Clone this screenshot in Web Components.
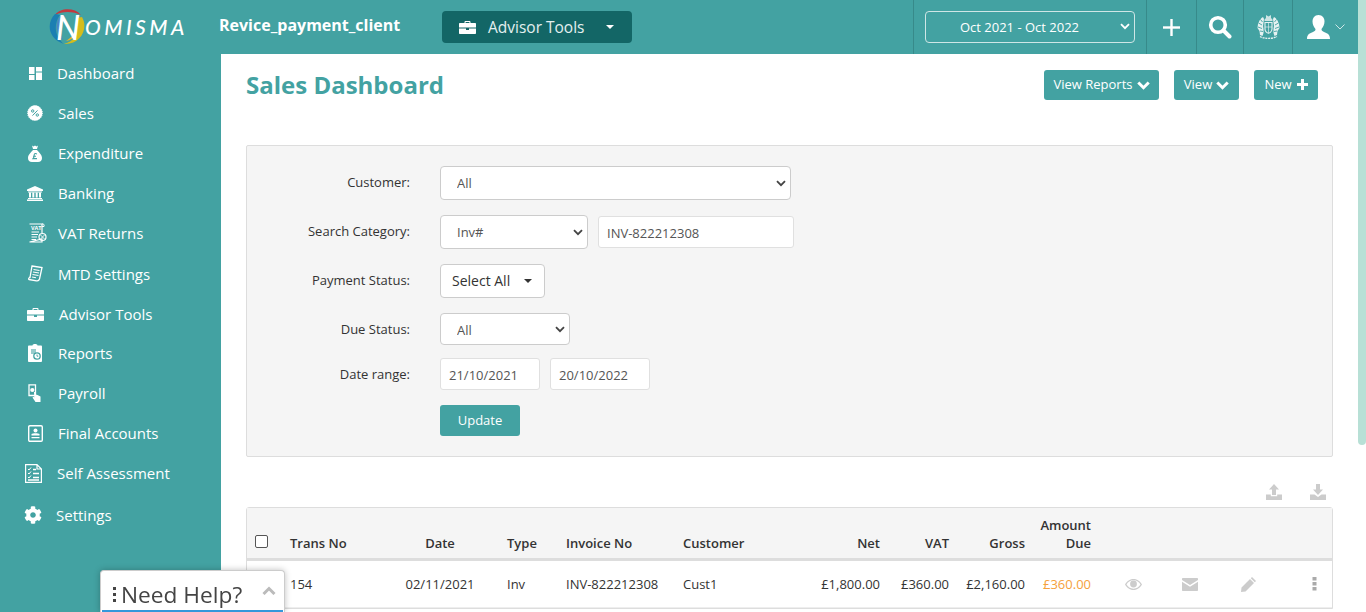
<!DOCTYPE html>
<html lang="en">
<head>
<meta charset="utf-8">
<title>Sales Dashboard</title>
<style>
  html, body { margin: 0; height: 612px; overflow: hidden; background: #fff; }
  body { font-family: "Open Sans", sans-serif; }
</style>
</head>
<body>
<nm-app></nm-app>

<script>
var TEAL = "#43a2a2";

var ICONS = {
  dashboard: `<svg width="13" height="13" viewBox="0 0 13 13" fill="#fff"><rect x="0" y="0" width="5.500" height="7"/><rect x="0" y="8" width="5.500" height="5"/><rect x="7" y="0" width="6" height="4.500"/><rect x="7" y="5.500" width="6" height="7.500"/></svg>`,
  sales: `<svg width="16" height="16" viewBox="0 0 16 16"><circle cx="8" cy="8" r="7.400" fill="#fff" stroke="#fff" stroke-width="1" stroke-dasharray="1.200 1"/><path d="M5.500 10.600 10.500 5.400" stroke="${TEAL}" stroke-width="1"/><circle cx="5.700" cy="6" r="1.200" fill="none" stroke="${TEAL}"/><circle cx="10.300" cy="10" r="1.200" fill="none" stroke="${TEAL}"/></svg>`,
  bag: `<svg width="14" height="17" viewBox="0 0 14 17"><path fill="#fff" d="M4 .5 5.500 1.500 7 .5 8.500 1.500 10 .5 9 4H5ZM5 5H9C10.500 7 14 9.500 14 13 14 15.500 12.500 17 10 17H4C1.500 17 0 15.500 0 13 0 9.500 3.500 7 5 5Z"/><path fill="none" stroke="${TEAL}" stroke-width="1.100" d="M8.700 9.200C8.300 8.300 6.300 8.200 6.200 9.800 6.100 11.500 6.400 12 5 13.600H9M5 11.300H8"/></svg>`,
  bank: `<svg width="16" height="15" viewBox="0 0 16 15" fill="#fff"><path d="M8 0 16 3.600V5H0V3.600Z"/><rect x="1" y="5.500" width="14" height="1"/><rect x="2" y="6.500" width="2" height="5"/><rect x="5.300" y="6.500" width="2" height="5"/><rect x="8.700" y="6.500" width="2" height="5"/><rect x="12" y="6.500" width="2" height="5"/><rect x="1" y="12" width="14" height="1"/><rect x="0" y="13.500" width="16" height="1.500"/></svg>`,
  vat: `<svg width="19" height="20" viewBox="0 0 19 20" fill="none" stroke="#fff"><path d="M1.500 1H14V10M14 16V19H1.500Z" stroke-width="1.200"/><path d="M14 1C15.500.5 16.500 1.500 16 3.500H14" stroke-width="1"/><text x="3" y="6.500" font-family="'Open Sans',sans-serif" font-size="5.500" font-weight="700" fill="#fff" stroke="none">VAT</text><path d="M3.500 9H11M3.500 11.500H10M3.500 14H9M3.500 16.500H8" stroke-width="1"/><circle cx="14.500" cy="14" r="3.500" stroke-width="1.200"/><path d="M12.500 12 16.500 16M16.500 12 12.500 16" stroke-width=".9"/></svg>`,
  mtd: `<svg width="15" height="17" viewBox="0 0 15 17" fill="none" stroke="#fff" stroke-width="1.300"><path d="M4 1 14 2.500 11.500 14C11 15.500 9.500 16 8.500 15.800L1 14.500C.5 14.500.5 13 1.500 12.500L2 12.600Z"/><path d="M5.500 4.500 11.500 5.500M5 7 11 8M4.500 9.500 10.500 10.500M4 12 8 12.700" stroke-width="1.100"/></svg>`,
  brief: `<svg width="17" height="13" viewBox="0 0 17 13" fill="#fff"><path d="M5.500 2V.9C5.500.4 5.900 0 6.400 0H10.600C11.100 0 11.500.4 11.500.9V2H16C16.600 2 17 2.400 17 3V6.500H0V3C0 2.400.4 2 1 2ZM6.600 1V2H10.400V1Z"/><path d="M0 7.500H7V9H10V7.500H17V12C17 12.600 16.600 13 16 13H1C.4 13 0 12.600 0 12Z"/></svg>`,
  reports: `<svg width="14" height="18" viewBox="0 0 14 18"><path fill="#fff" d="M1 1.500H4.500C4.500.5 5.500 0 7 0S9.500.5 9.500 1.500H13C13.500 1.500 14 2 14 2.500V17C14 17.500 13.500 18 13 18H1C.5 18 0 17.500 0 17V2.500C0 2 .5 1.500 1 1.500Z"/><rect x="3" y="5" width="5" height="5" fill="${TEAL}" opacity=".55"/><circle cx="9" cy="12" r="3.200" fill="none" stroke="${TEAL}" stroke-width="1.300"/><path d="M9 10.500V12.200H10.300" fill="none" stroke="${TEAL}" stroke-width=".9"/></svg>`,
  payroll: `<svg width="13" height="18" viewBox="0 0 13 18"><path fill="none" stroke="#fff" stroke-width="1.300" d="M1 .8H7.500V11.500H1Z"/><circle cx="4.300" cy="6" r="2.100" fill="#fff"/><path fill="#fff" d="M6 8 7.300 8 7.500 10.500 9.500 11 12.500 12.500 12.500 18H7.500L4.500 13.500 5.500 12.800 6.300 13.600Z"/></svg>`,
  accounts: `<svg width="15" height="17" viewBox="0 0 15 17"><rect x=".7" y=".7" width="13.600" height="15.600" rx="1.200" fill="none" stroke="#fff" stroke-width="1.400"/><circle cx="7.500" cy="5.500" r="2" fill="#fff"/><path fill="#fff" d="M3.500 9C4.500 8 10.500 8 11.500 9V10.500H3.500ZM3.500 12H11.500V13.200H3.500Z"/></svg>`,
  self: `<svg width="17" height="19" viewBox="0 0 17 19" fill="none" stroke="#fff" stroke-width="1.200"><path d="M.6.6H12L16.400 5V18.400H.6ZM12 .6V5H16.400"/><path d="M3 5 4 6 6 3.500M3 9 4 10 6 7.500M3 13 4 14 6 11.500" stroke-width="1"/><path d="M8 5.500H11M8 9.500H14M8 13.500H14M3 16H14" stroke-width="1.300"/></svg>`,
  gear: `<svg width="18" height="18" viewBox="0 0 512 512" fill="#fff"><path d="M487 316l-42-25c4-23 4-47 0-70l42-25c5-3 7-9 5-14-11-35-30-67-54-93-4-4-10-5-14-2l-43 24c-18-15-38-27-61-35V27c0-5-4-10-9-11-37-8-74-8-109 0-5 1-9 6-9 11v49c-22 8-43 20-61 35L89 87c-5-3-11-2-14 2-25 26-43 58-54 93-2 5 0 11 5 14l42 25c-4 23-4 47 0 70l-42 25c-5 3-7 9-5 14 11 35 30 67 54 93 4 4 10 5 14 2l43-24c18 15 38 27 61 35v49c0 5 4 10 9 11 37 8 74 8 109 0 5-1 9-6 9-11v-49c22-8 43-20 61-35l43 24c5 3 11 2 14-2 25-26 43-58 54-93 2-5 0-11-5-14zM256 336c-44 0-80-36-80-80s36-80 80-80 80 36 80 80-36 80-80 80z"/></svg>`,
  chevron: `<svg width="13" height="9" viewBox="0 0 13 9" fill="none" stroke="currentColor" stroke-width="3"><path d="M1.300 1.500 6.500 6.700 11.700 1.500"/></svg>`,
  arrow: `<svg width="10" height="7" viewBox="0 0 12 8" fill="none" stroke="currentColor" stroke-width="2.200"><path d="M1.200 1.200 6 6 10.800 1.200"/></svg>`
};

class NmLogo extends HTMLElement {
  constructor() {
    super();
    this.attachShadow({mode: "open"}).innerHTML = `
      <style>
        :host { display: flex; align-items: center; width: 136px; height: 36px; }
        .mark { position: relative; width: 37px; height: 36px; flex: none; }
        svg { display: block; }
        .n { position: absolute; left: 5px; top: -3px; width: 28px; text-align: center; font: italic 500 34px/42px Lato, sans-serif; color: #fff; }
        .word { margin-left: -1px; font: italic 500 21px/36px Lato, sans-serif; letter-spacing: 3.500px; color: #fff; white-space: nowrap; }
      </style>
      <div class="mark">
        <svg width="37" height="36" viewBox="0 0 37 36">
          <path fill="#c2393f" d="M6 6C11-1 25-2 32 6 24 2 13 2 6 6Z"/>
          <path fill="#1b7fb2" d="M6 5C-3 14-1 30 15 35 6 28 4 16 11 6 9 5.500 7 5 6 5Z"/>
          <path fill="#4a86c4" d="M13 6C5 12 6 25 15 32 9 24 9 14 16 7Z"/>
          <path fill="#d4bc1c" d="M33 8C40 20 31 36 15 35 27 32 31 22 28 9Z"/>
          <path fill="#e6b52a" d="M27 12C29 21 25 27 17 32 26 31 31 22 29 12Z"/>
        </svg>
        <span class="n">N</span>
      </div>
      <span class="word">OMISMA</span>
    `;
  }
}
customElements.define("nm-logo", NmLogo);

class NmTopbar extends HTMLElement {
  constructor() {
    super();
    this.attachShadow({mode: "open"}).innerHTML = `
      <style>
        :host { display: flex; align-items: stretch; height: 54px; background: ${TEAL}; color: #fff; }
        .brand { padding-left: 49px; width: 170px; display: flex; align-items: center; padding-bottom: 1px; }
        .client { width: 223px; font-weight: 700; font-size: 16px; line-height: 50px; white-space: nowrap; }
        .tools { display: flex; align-items: center; align-self: flex-start; margin-top: 11px; width: 190px; height: 32px; background: #136666; border-radius: 4px; padding-left: 17px; box-sizing: border-box; font-size: 15.500px; color: #e4f0f0; }
        .tools span { margin-left: 12px; }
        .caret { width: 0; height: 0; margin-left: 21px; border: 4px solid transparent; border-top-color: #fff; border-bottom: 0; }
        .spacer { width: 281px; }
        .cell { display: flex; align-items: center; justify-content: center; border-left: 1px solid #378a8a; box-sizing: border-box; }
        .range { width: 233px; padding-left: 11px; justify-content: flex-start; }
        .plus { width: 50px; } .search { width: 47px; } .arms { width: 49px; } .user { width: 66px; }
        .period { position: relative; width: 210px; height: 32px; }
        select { appearance: none; display: block; width: 100%; height: 32px; padding: 0 21px 1px 0; background: transparent; border: 1px solid #cfe6e6; border-radius: 4px; color: #fff; font: 13px "Open Sans", sans-serif; text-align: center; }
        .period svg { position: absolute; right: 5px; top: 12px; color: #fff; }
        .user { gap: 5px; padding-left: 1px; }
      </style>
      <div class="brand"><nm-logo></nm-logo></div>
      <div class="client">Revice_payment_client</div>
      <div class="tools">${ICONS.brief}<span>Advisor Tools</span><i class="caret"></i></div>
      <div class="spacer"></div>
      <div class="cell range">
        <div class="period">
          <select><option>Oct 2021 - Oct 2022</option></select>
          ${ICONS.arrow}
        </div>
      </div>
      <div class="cell plus"><svg width="17" height="17" viewBox="0 0 17 17" fill="#fff"><rect x="7.300" y="0" width="2.400" height="17"/><rect x="0" y="7.300" width="17" height="2.400"/></svg></div>
      <div class="cell search"><svg width="24" height="24" viewBox="0 0 24 24" fill="none" stroke="#fff"><circle cx="10" cy="10" r="7.300" stroke-width="3.600"/><path d="M15.500 15.500 21.500 21.500" stroke-width="4" stroke-linecap="round"/></svg></div>
      <div class="cell arms"><svg width="23" height="24" viewBox="0 0 23 24" fill="#e6f1f1">
        <path d="M9 0 11.500 1.500 14 0V3L15.500 4.500V6H7.500V4.500L9 3Z" opacity=".85"/>
        <path d="M6 2 7 4 6.500 7.500 6 11 6.500 14 6.500 18 5.500 21 3 20 2.500 16 .5 13 1 9 2.500 5.500 4.500 3Z"/>
        <path d="M17 2 16 4 16.500 7.500 17 11 16.500 14 16.500 18 17.500 21 20 20 20.500 16 22.500 13 22 9 20.500 5.500 18.500 3Z"/>
        <path fill="none" stroke="${TEAL}" stroke-width=".9" d="M1.500 8 5 10M1 12 5 13.500M3 16 6 16.500M3.500 4.500 5.500 7M21.500 8 18 10M22 12 18 13.500M20 16 17 16.500M19.500 4.500 17.500 7"/>
        <path fill="none" stroke="#e6f1f1" stroke-width="1.100" d="M8 7.500H15V14C15 16.500 13 17.800 11.500 18.300 10 17.800 8 16.500 8 14Z"/>
        <path fill="none" stroke="#e6f1f1" stroke-width=".8" opacity=".8" d="M11.500 7.500V18M8 12H15"/>
        <path fill="none" stroke="#e6f1f1" stroke-width="1.400" stroke-dasharray="2 .8" d="M3 21.500C7.500 24 15.500 24 20 21.500"/>
      </svg></div>
      <div class="cell user"><svg width="23" height="24" viewBox="0 0 23 24" fill="#fff"><path d="M11.500 0C15.500 0 17.500 3 17.500 6.500 17.500 9.500 16 12.500 14.500 14 14.500 15.500 15 16 17 17 20 18.300 23 19 23 24H0C0 19 3 18.300 6 17 8 16 8.500 15.500 8.500 14 7 12.500 5.500 9.500 5.500 6.500 5.500 3 7.500 0 11.500 0Z"/></svg>
        <svg width="10" height="6" viewBox="0 0 10 6" fill="none" stroke="#cfe6e6" stroke-width="1"><path d="M.5.5 5 5 9.500.5"/></svg></div>
    `;
  }
}
customElements.define("nm-topbar", NmTopbar);

class NmNavItem extends HTMLElement {
  constructor() {
    super();
    const icon = this.getAttribute("icon");
    const gap = this.getAttribute("text-x") || "58";
    const iconX = this.getAttribute("icon-x") || "35";
    const h = this.getAttribute("h") || "40";
    this.attachShadow({mode: "open"}).innerHTML = `
      <style>
        :host { display: grid; grid-template-columns: ${gap}px 1fr; height: ${h}px; align-items: center; color: #fff; font-size: 15px; white-space: nowrap; }
        .ico { display: flex; justify-content: center; width: 0; margin-left: ${iconX}px; }
        svg { display: block; flex: none; }
      </style>
      <div class="ico">${ICONS[icon]}</div>
      <slot></slot>
    `;
  }
}
customElements.define("nm-nav-item", NmNavItem);

class NmSidebar extends HTMLElement {
  constructor() {
    super();
    this.attachShadow({mode: "open"}).innerHTML = `
      <style>
        :host { display: block; width: 221px; flex: none; background: ${TEAL}; height: 558px; }
      </style>
      <slot></slot>
    `;
  }
}
customElements.define("nm-sidebar", NmSidebar);

class NmButton extends HTMLElement {
  constructor() {
    super();
    this.attachShadow({mode: "open"}).innerHTML = `
      <style>
        :host { display: inline-flex; align-items: center; justify-content: center; gap: 4px; height: 30px; box-sizing: border-box; padding-bottom: 2px; background: ${TEAL}; color: #fff; border-radius: 3px; font-size: 13px; white-space: nowrap; }
      </style>
      <slot></slot>
    `;
  }
}
customElements.define("nm-button", NmButton);

class NmPageHead extends HTMLElement {
  constructor() {
    super();
    this.attachShadow({mode: "open"}).innerHTML = `
      <style>
        :host { display: flex; height: 91px; }
        h1 { flex: 1; margin: 14px 0 0; font-size: 24px; line-height: 34px; font-weight: 700; color: ${TEAL}; }
        .acts { display: flex; gap: 15px; margin: 16px 15px 0 0; align-items: flex-start; }
        .ico { display: block; margin-top: 3px; }
        .ico svg { display: block; }
      </style>
      <h1>Sales Dashboard</h1>
      <div class="acts">
        <nm-button style="width:115px">View Reports <span class="ico">${ICONS.chevron}</span></nm-button>
        <nm-button style="width:65px">View <span class="ico">${ICONS.chevron}</span></nm-button>
        <nm-button style="width:64px;gap:5px">New <span class="ico" style="margin-top:0"><svg width="11" height="11" viewBox="0 0 11 11" fill="#fff"><path d="M4 0H7V4H11V7H7V11H4V7H0V4H4Z"/></svg></span></nm-button>
      </div>
    `;
  }
}
customElements.define("nm-page-head", NmPageHead);

class NmFilterPanel extends HTMLElement {
  constructor() {
    super();
    const dropdown = (w, h, txt, top) => `
      <div class="drop" style="width:${w}px;height:${h}px">
        <select style="height:${h}px;padding-top:${top}px"><option>${txt}</option></select>
        ${ICONS.arrow}
      </div>`;
    this.attachShadow({mode: "open"}).innerHTML = `
      <style>
        :host { display: block; box-sizing: border-box; height: 312px; padding: 20px 0 0 0; background: #f5f5f5; border: 1px solid #ddd; border-radius: 2px; color: #333; font-size: 13px; }
        .row { display: grid; grid-template-columns: 163px 1fr; column-gap: 30px; align-items: center; }
        label { text-align: right; margin-top: -2px; white-space: nowrap; }
        label.low { margin-top: 0; }
        .ctl { display: flex; gap: 10px; align-items: center; }
        .drop { position: relative; flex: none; }
        .drop svg { position: absolute; right: 5px; top: 50%; margin-top: -3px; color: #444; }
        select { appearance: none; display: block; width: 100%; padding: 0 0 0 16px; background: #fff; border: 1px solid #ccc; border-radius: 4px; color: #555; font: 13px "Open Sans", sans-serif; }
        input { box-sizing: border-box; height: 32px; padding: 1px 8px 0; background: #fff; border: 1px solid #e0e0e0; border-radius: 3px; color: #555; font: 13px "Open Sans", sans-serif; }
        .ms { display: flex; align-items: center; width: 105px; height: 34px; box-sizing: border-box; padding: 0 0 1px 11px; background: #fff; border: 1px solid #ccc; border-radius: 4px; font-size: 14px; color: #333; }
        .caret { width: 0; height: 0; margin-left: 14px; border: 4px solid transparent; border-top-color: #333; border-bottom: 0; }
      </style>
      <div class="row" style="height:34px"><label>Customer:</label><div class="ctl">${dropdown(351, 34, "All", 0)}</div></div>
      <div class="row" style="height:34px;margin-top:15px"><label>Search Category:</label><div class="ctl">${dropdown(148, 34, "Inv#", 0)}<input value="INV-822212308" style="width:196px"></div></div>
      <div class="row" style="height:34px;margin-top:15px"><label>Payment Status:</label><div class="ctl"><div class="ms">Select All<i class="caret"></i></div></div></div>
      <div class="row" style="height:32px;margin-top:15px"><label class="low">Due Status:</label><div class="ctl">${dropdown(130, 32, "All", 2)}</div></div>
      <div class="row" style="height:32px;margin-top:13px"><label class="low">Date range:</label><div class="ctl"><input value="21/10/2021" style="width:100px"><input value="20/10/2022" style="width:100px"></div></div>
      <div class="row" style="height:31px;margin-top:15px"><span></span><div class="ctl"><nm-button style="width:80px;height:31px">Update</nm-button></div></div>
    `;
  }
}
customElements.define("nm-filter-panel", NmFilterPanel);

class NmSalesTable extends HTMLElement {
  constructor() {
    super();
    this.attachShadow({mode: "open"}).innerHTML = `
      <style>
        :host { display: block; color: #333; font-size: 13px; }
        .tools { display: flex; justify-content: flex-end; gap: 28px; height: 50px; padding: 27px 7px 0 0; box-sizing: border-box; }
        .tools svg { display: block; }
        .box { border: 1px solid #ddd; border-radius: 3px 3px 0 0; }
        table { width: 100%; border-collapse: collapse; table-layout: fixed; }
        th { background: #f5f5f5; height: 44px; padding: 0 0 6px; border-bottom: 3px solid #ddd; font-weight: 600; vertical-align: bottom; line-height: 18px; color: #333; }
        td { height: 46px; padding: 0; border-bottom: 1px solid #eee; }
        .l { text-align: left; } .r { text-align: right; } .c { text-align: center; }
        .type { padding-left: 17px; }
        td.c svg { display: block; margin: 0 auto; }
        .due { color: #f5a13c; }
        .chk { display: block; width: 13px; height: 13px; margin: 0 0 4px 8px; box-sizing: border-box; border: 1px solid #555; border-radius: 2px; background: #fff; }
      </style>
      <div class="tools">
        <svg width="16" height="16" viewBox="0 0 16 16" fill="#ccc"><path d="M8 0 13 5.500H10V11H6V5.500H3ZM0 10.500H4.800V12.200H11.200V10.500H16V16H0Z"/></svg>
        <svg width="16" height="16" viewBox="0 0 16 16" fill="#ccc"><path d="M6 0H10V5.500H13L8 11 3 5.500H6ZM0 10.500H4.500L8 13 11.500 10.500H16V16H0Z"/></svg>
      </div>
      <div class="box">
        <table>
          <colgroup>
            <col style="width:43px"><col style="width:100px"><col style="width:100px"><col style="width:76px"><col style="width:117px"><col style="width:110px"><col style="width:87px"><col style="width:69px"><col style="width:76px"><col style="width:66px"><col style="width:84px"><col style="width:30px"><col style="width:86px"><col>
          </colgroup>
          <thead><tr>
            <th class="l"><span class="chk" role="checkbox" aria-label="Select all"></span></th>
            <th class="l">Trans No</th><th class="c">Date</th><th class="l type">Type</th><th class="l">Invoice No</th><th class="l">Customer</th>
            <th class="r">Net</th><th class="r">VAT</th><th class="r">Gross</th><th class="r">Amount<br>Due</th>
            <th></th><th></th><th></th><th></th>
          </tr></thead>
          <tbody><tr>
            <td></td><td class="l">154</td><td class="c">02/11/2021</td><td class="l type">Inv</td><td class="l">INV-822212308</td><td class="l">Cust1</td>
            <td class="r">£1,800.00</td><td class="r">£360.00</td><td class="r">£2,160.00</td><td class="r due">£360.00</td>
            <td class="c"><svg width="17" height="11" viewBox="0 0 17 11" fill="#ccc"><path fill-rule="evenodd" d="M8.500 0C12.500 0 15.500 2.600 17 5.500 15.500 8.400 12.500 11 8.500 11S1.500 8.400 0 5.500C1.500 2.600 4.500 0 8.500 0ZM8.500 1.300C5.300 1.300 2.800 3.300 1.500 5.500 2.800 7.700 5.300 9.700 8.500 9.700S14.200 7.700 15.500 5.500C14.200 3.300 11.700 1.300 8.500 1.300Z"/><circle cx="8.500" cy="5" r="3.400"/></svg></td>
            <td class="c"><svg width="16" height="13" viewBox="0 0 16 13" fill="#ccc"><path d="M1 0H15C15.600 0 16 .4 16 1V2L8 7 0 2V1C0 .4.400 0 1 0ZM0 3.800 8 8.800 16 3.800V12C16 12.600 15.600 13 15 13H1C.4 13 0 12.600 0 12Z"/></svg></td>
            <td class="c"><svg width="15" height="15" viewBox="0 0 15 15" fill="#ccc"><path d="M11 0 15 4 13.800 5.200 9.800 1.200ZM9 2 13 6 4.500 14.500 0 15 .5 10.500Z"/></svg></td>
            <td class="c" style="padding-left:5px"><svg width="5" height="14" viewBox="0 0 5 14" fill="#aaa"><rect x=".5" y="0" width="4" height="3.500"/><rect x=".5" y="5" width="4" height="3.500"/><rect x=".5" y="10" width="4" height="3.500"/></svg></td>
          </tr></tbody>
        </table>
      </div>
    `;
  }
}
customElements.define("nm-sales-table", NmSalesTable);

class NmHelpTab extends HTMLElement {
  constructor() {
    super();
    this.attachShadow({mode: "open"}).innerHTML = `
      <style>
        :host { position: fixed; left: 100px; top: 570px; width: 185px; height: 42px; box-sizing: border-box; background: #fff; border: 1px solid #ccc; border-bottom: 0; border-radius: 4px 4px 0 0; box-shadow: 0 0 6px rgba(0,0,0,.25); display: flex; flex-direction: column; overflow: hidden; }
        .line { flex: 1; display: flex; align-items: center; padding: 8px 0 0 12px; color: #444; font-size: 22.700px; white-space: nowrap; }
        .dots { display: block; margin-right: 5px; }
        .up { margin-left: 20px; margin-bottom: 8px; }
        .bar { height: 4px; margin: 0 1px; background: #3498db; }
      </style>
      <div class="line">
        <svg class="dots" width="3" height="15" viewBox="0 0 3 15" fill="#444"><rect y="0" width="3" height="3"/><rect y="6" width="3" height="3"/><rect y="12" width="3" height="3"/></svg>
        <span>Need Help?</span>
        <svg class="up" width="14" height="9" viewBox="0 0 14 9" fill="none" stroke="#bbb" stroke-width="3"><path d="M1.500 8 7 2.500 12.500 8"/></svg>
      </div>
      <div class="bar"></div>
    `;
  }
}
customElements.define("nm-help-tab", NmHelpTab);

class NmScrollbar extends HTMLElement {
  constructor() {
    super();
    this.attachShadow({mode: "open"}).innerHTML = `
      <style>
        :host { display: block; width: 8px; flex: none; background: #fff; }
        div { height: 445px; background: #b8e0d6; border-radius: 0 0 4px 4px; }
      </style>
      <div></div>
    `;
  }
}
customElements.define("nm-scrollbar", NmScrollbar);

class NmApp extends HTMLElement {
  constructor() {
    super();
    this.attachShadow({mode: "open"}).innerHTML = `
      <style>
        :host { display: flex; height: 612px; overflow: hidden; }
        .page { flex: 1; min-width: 0; }
        .body { display: flex; }
        main { flex: 1; min-width: 0; padding: 0 25px; height: 558px; overflow: hidden; }
      </style>
      <div class="page">
        <nm-topbar></nm-topbar>
        <div class="body">
          <nm-sidebar>
            <nm-nav-item icon="dashboard" text-x="57" style="margin-top:-1px">Dashboard</nm-nav-item>
            <nm-nav-item icon="sales">Sales</nm-nav-item>
            <nm-nav-item icon="bag">Expenditure</nm-nav-item>
            <nm-nav-item icon="bank">Banking</nm-nav-item>
            <nm-nav-item icon="vat" icon-x="37">VAT Returns</nm-nav-item>
            <nm-nav-item icon="mtd" h="41">MTD Settings</nm-nav-item>
            <nm-nav-item icon="brief" text-x="59">Advisor Tools</nm-nav-item>
            <nm-nav-item icon="reports" h="38" style="margin-bottom:1px">Reports</nm-nav-item>
            <nm-nav-item icon="payroll" icon-x="34">Payroll</nm-nav-item>
            <nm-nav-item icon="accounts">Final Accounts</nm-nav-item>
            <nm-nav-item icon="self" icon-x="33" text-x="57">Self Assessment</nm-nav-item>
            <nm-nav-item icon="gear" icon-x="33" text-x="56" h="44">Settings</nm-nav-item>
          </nm-sidebar>
          <main>
            <nm-page-head></nm-page-head>
            <nm-filter-panel></nm-filter-panel>
            <nm-sales-table></nm-sales-table>
          </main>
        </div>
      </div>
      <nm-scrollbar></nm-scrollbar>
      <nm-help-tab></nm-help-tab>
    `;
  }
}
customElements.define("nm-app", NmApp);
</script>
</body>
</html>
